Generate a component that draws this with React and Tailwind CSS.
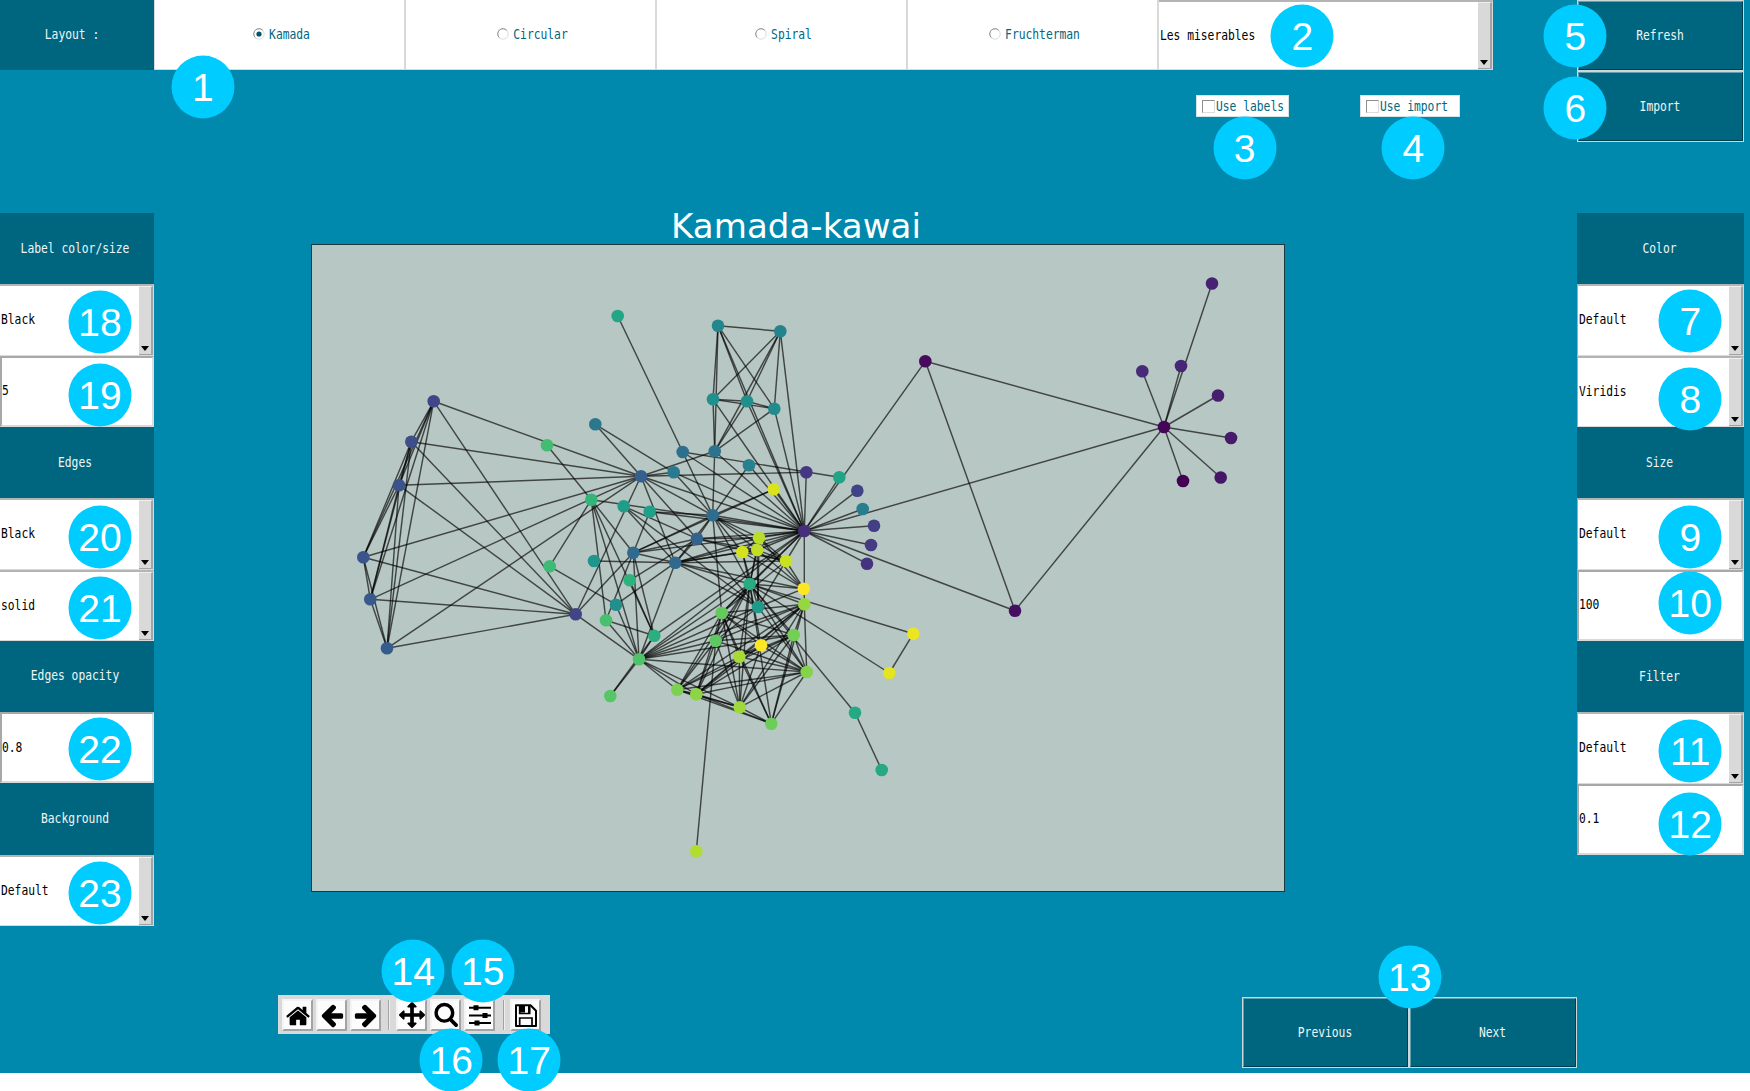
import React from "react";

/* Node: [x, y, colour index] on the figure canvas */
const NODES = {
  Napoleon: [1183, 481, 0], Myriel: [1164, 427, 1], Baptistine: [925.3, 361.3, 2], Magloire: [1015, 610.7, 3],
  Countess: [1220.7, 477.5, 4], Geborand: [1231, 438, 5], Champtercier: [1218, 395.5, 6], Cravatte: [1212, 283.5, 7],
  Count: [1181, 366, 8], OldMan: [1142.3, 371.3, 9], Valjean: [804.3, 531, 10], Labarre: [867, 563.7, 11],
  Marguerite: [806.3, 472.3, 12], MmeDeR: [871, 545, 13], Isabeau: [874, 525.7, 14], Gervais: [857.3, 490.7, 15],
  Listolier: [433.7, 401.3, 16], Tholomyes: [575.7, 614.3, 15.5], Fameuil: [411.3, 441.7, 18], Blacheville: [399, 485.3, 19],
  Favourite: [363.3, 557.3, 20], Dahlia: [370.3, 599.3, 21], Zephine: [387, 648.3, 22], Fantine: [641, 476.3, 23],
  MmeThenardier: [697, 538.7, 24], Thenardier: [675.3, 562.7, 25], Cosette: [633.3, 552.7, 26], Javert: [712.7, 515.3, 27],
  Fauchelevent: [682.7, 452, 28], Bamatabois: [714.7, 451.3, 29], Perpetue: [595.3, 424.3, 30], Simplice: [673.7, 472.3, 31],
  Scaufflaire: [862.7, 509, 32], Woman1: [749, 465.3, 33], Judge: [780.3, 331.3, 34], Champmathieu: [718, 325.7, 35],
  Brevet: [774.3, 408.7, 36], Chenildieu: [713, 399.3, 38], Cochepaille: [747, 401.3, 38], Pontmercy: [616, 604.7, 38],
  Boulatruelle: [594, 561, 40], Eponine: [758, 607, 41], Anzelma: [623.7, 506.3, 42], Woman2: [649.7, 511.7, 43],
  Innocent: [839.3, 477.3, 44], Gribier: [617.7, 316, 45], Burgon: [855, 712.7, 46], Jondrette: [881.7, 770, 46],
  Gavroche: [749.7, 584, 47], Gillenormand: [654.3, 635.7, 48], Magnon: [629.7, 580.3, 49], MlleGillenormand: [591.3, 499.7, 50],
  MmePontmercy: [549.7, 566.3, 52], Vaubois: [547, 445.3, 53], LtGillenormand: [606, 620.3, 54], Marius: [639, 659.3, 55],
  BaronessT: [610.3, 696, 56], Mabeuf: [715.7, 640.7, 57], Enjolras: [721.7, 613, 58], Combeferre: [793.7, 635, 60],
  Prouvaire: [771.3, 723.7, 59], Feuilly: [677.3, 689.7, 61], Courfeyrac: [806.7, 672, 62], Bahorel: [696.3, 694.3, 63],
  Bossuet: [804.3, 604.3, 64], Joly: [739.7, 707.3, 65], Grantaire: [739.3, 656.7, 66], Plutarch: [696.3, 851.3, 67],
  Gueulemer: [759, 537.7, 68], Babet: [757.3, 550, 69], Claquesous: [786, 561, 70], Montparnasse: [742.3, 552, 71],
  Toussaint: [773.7, 489.3, 72], Child1: [889.3, 673, 73], Child2: [913.3, 633.7, 74], Brujon: [803.7, 588.7, 76],
  Hucheloup: [761, 645.3, 76],
};

/* Each line: a character followed by the ones it appears with */
const LINKS = `Myriel Napoleon Baptistine Magloire Countess Geborand Champtercier Cravatte Count OldMan Valjean
Magloire Baptistine Valjean
Valjean Baptistine Labarre Marguerite MmeDeR Isabeau Gervais Fantine MmeThenardier Thenardier Cosette Javert Fauchelevent Bamatabois Simplice Scaufflaire Woman1 Judge Champmathieu Brevet Chenildieu Cochepaille Woman2 Innocent Gavroche Gillenormand MlleGillenormand Marius Enjolras Bossuet Gueulemer Babet Claquesous Montparnasse Toussaint
Tholomyes Listolier Fameuil Blacheville Favourite Dahlia Zephine Fantine Cosette Marius
Listolier Fameuil Blacheville Favourite Dahlia Zephine Fantine
Fameuil Blacheville Favourite Dahlia Zephine Fantine
Blacheville Favourite Dahlia Zephine Fantine
Favourite Dahlia Zephine Fantine
Dahlia Zephine Fantine
Zephine Fantine
Fantine Marguerite MmeThenardier Thenardier Javert Bamatabois Perpetue Simplice
MmeThenardier Thenardier Cosette Javert Eponine Anzelma Magnon Gueulemer Babet Claquesous
Thenardier Cosette Javert Pontmercy Boulatruelle Eponine Anzelma Gavroche Marius Gueulemer Babet Claquesous Montparnasse Brujon
Cosette Javert Woman2 Gillenormand MlleGillenormand LtGillenormand Marius Toussaint
Javert Fauchelevent Bamatabois Simplice Woman1 Woman2 Gavroche Enjolras Gueulemer Babet Claquesous Montparnasse Toussaint
Fauchelevent Innocent Gribier
Bamatabois Judge Champmathieu Brevet Chenildieu Cochepaille
Simplice Perpetue
Judge Champmathieu Brevet Chenildieu Cochepaille
Champmathieu Brevet Chenildieu Cochepaille
Brevet Chenildieu Cochepaille
Chenildieu Cochepaille
Eponine Anzelma Marius Mabeuf Courfeyrac Gueulemer Babet Claquesous Montparnasse Brujon
Burgon Jondrette Gavroche
Gillenormand Magnon MlleGillenormand LtGillenormand Marius BaronessT
MlleGillenormand MmePontmercy Vaubois LtGillenormand Marius
Pontmercy MmePontmercy Marius
Marius Gavroche LtGillenormand BaronessT Mabeuf Enjolras Combeferre Feuilly Courfeyrac Bahorel Bossuet Joly
Gavroche Mabeuf Enjolras Combeferre Prouvaire Feuilly Courfeyrac Bahorel Bossuet Joly Grantaire Gueulemer Babet Montparnasse Child1 Child2 Brujon Hucheloup
Mabeuf Enjolras Combeferre Feuilly Courfeyrac Bahorel Bossuet Joly Plutarch
Enjolras Combeferre Prouvaire Feuilly Courfeyrac Bahorel Bossuet Joly Grantaire Claquesous Hucheloup
Combeferre Prouvaire Feuilly Courfeyrac Bahorel Bossuet Joly Grantaire
Prouvaire Feuilly Courfeyrac Bahorel Bossuet Joly Grantaire
Feuilly Courfeyrac Bahorel Bossuet Joly Grantaire
Courfeyrac Bahorel Bossuet Joly Grantaire Hucheloup
Bahorel Bossuet Joly Grantaire Hucheloup
Bossuet Joly Grantaire Hucheloup
Joly Grantaire Hucheloup
Grantaire Hucheloup
Gueulemer Babet Claquesous Montparnasse Brujon
Babet Claquesous Montparnasse Brujon
Claquesous Montparnasse Brujon
Montparnasse Brujon
Child1 Child2`
  .split("\n")
  .flatMap((line) => {
    const [from, ...rest] = line.trim().split(" ");
    return rest.map((to) => [from, to]);
  });

const VIRIDIS = [
  [68, 1, 84], [72, 26, 108], [71, 47, 125], [65, 68, 135], [57, 86, 140], [49, 104, 142], [42, 120, 142],
  [35, 136, 142], [31, 152, 139], [34, 168, 132], [53, 183, 121], [84, 197, 104], [122, 209, 81],
  [165, 219, 54], [210, 226, 27], [253, 231, 37],
];
function viridis(t) {
  const p = Math.min(t, 1) * 15;
  const i = Math.min(Math.floor(p), 14);
  const c = VIRIDIS[i].map((v, k) => Math.round(v + (VIRIDIS[i + 1][k] - v) * (p - i)));
  return `rgb(${c.join(",")})`;
}

function Graph() {
  return (
    <svg viewBox="312 245 972 646" className="block h-full w-full">
      <g stroke="#000" strokeOpacity="0.65" strokeWidth="1.45">
        {LINKS.map(([a, b]) => (
          <line key={a + b} x1={NODES[a][0]} y1={NODES[a][1]} x2={NODES[b][0]} y2={NODES[b][1]} />
        ))}
      </g>
      {Object.entries(NODES).map(([name, [x, y, i]]) => (
        <circle key={name} cx={x} cy={y} r="6.3" fill={viridis(i / 76)} />
      ))}
    </svg>
  );
}

function T({ children, className = "" }) {
  return (
    <span className={`inline-block origin-center translate-y-[0.5px] scale-y-[1.22] whitespace-pre font-['DejaVu_Sans_Mono',monospace] text-[11.3px] leading-[14px] ${className}`}>
      {children}
    </span>
  );
}

function Header({ children, className = "pr-1" }) {
  return (
    <div className={`flex min-h-0 items-center justify-center bg-[#00667f] text-[#eef6f8] ${className}`}>
      <T>{children}</T>
    </div>
  );
}

function ListBox({ children, className = "border-l" }) {
  return (
    <div className={`flex min-h-0 items-center justify-between border-t-2 border-r border-b border-t-[#b4b4b4] border-r-[#d9d9d9] border-b-[#d9d9d9] border-l-[#a8a8a8] bg-white text-black ${className}`}>
      <T className="pl-px">{children}</T>
      <div className="flex h-full w-[14px] items-end justify-center border-t border-r-2 border-b border-t-[#efefef] border-r-[#a3a3a3] border-b-[#a3a3a3] bg-[#d9d9d9] pb-[3px]">
        <svg viewBox="0 0 8 5" className="h-[5px] w-2"><path d="M0 0h8L4 5z" fill="#000" /></svg>
      </div>
    </div>
  );
}

function Entry({ children }) {
  return (
    <div className="flex min-h-0 items-center border-2 border-t-[#a8a8a8] border-r-[#dedede] border-b-[#d9d9d9] border-l-[#a8a8a8] bg-white text-black">
      <T>{children}</T>
    </div>
  );
}

function Button({ children, className = "" }) {
  return (
    <div className={`border border-[#cfd6d8] ${className}`}>
      <div className="flex h-full items-center justify-center border border-t-[#5fa0b0] border-r-[#003e4e] border-b-[#003e4e] border-l-[#5fa0b0] bg-[#00667f] pr-px text-[#eef6f8]">
        <T>{children}</T>
      </div>
    </div>
  );
}

function Radio({ label, checked }) {
  return (
    <div className="flex h-full w-[251px] items-center justify-center gap-1 border-r-2 border-b border-[#d9d9d9] bg-white pl-1 text-[#00667f]">
      <svg viewBox="0 0 12 12" className="-mt-0.5 h-3 w-3">
        <circle cx="6" cy="6" r="5.2" fill="#fff" stroke="#dcdcdc" />
        <path d="M2.2 9.6A5.2 5.2 0 0 1 9.8 2.3" fill="none" stroke="#8f8f8f" />
        {checked && <circle cx="6" cy="6" r="2.6" fill="#00556b" />}
      </svg>
      <T>{label}</T>
    </div>
  );
}

function Check({ label, className }) {
  return (
    <div className={`flex h-[22px] items-center gap-[1px] border border-[#d5e3e7] bg-white pl-[5px] text-[#00667f] ${className}`}>
      <div className="h-[13px] w-[13px] shrink-0 border border-t-[#8f8f8f] border-r-[#dcdcdc] border-b-[#dcdcdc] border-l-[#8f8f8f] bg-white" />
      <T className="mt-px">{label}</T>
    </div>
  );
}

const FA = {
  home: "M1472 992v480q0 26-19 45t-45 19h-384v-384h-256v384h-384q-26 0-45-19t-19-45v-480q0-1 .5-3t.5-3l575-474 575 474q1 2 1 6zm223-69l-62 74q-8 9-21 11h-3q-13 0-21-7l-692-577-692 577q-12 8-24 7-13-2-21-11l-62-74q-8-10-7-23.5t11-21.5l719-599q32-26 76-26t76 26l244 204v-195q0-14 9-23t23-9h192q14 0 23 9t9 23v408l219 182q10 8 11 21.5t-7 23.5z",
  back: "M1664 896v128q0 53-32.5 90.5t-84.5 37.5h-704l293 294q38 36 38 90t-38 90l-75 76q-37 37-90 37-52 0-91-37l-651-652q-37-37-37-90 0-52 37-91l651-650q38-38 91-38 52 0 90 38l75 74q38 38 38 91t-38 91l-293 293h704q52 0 84.5 37.5t32.5 90.5z",
  move: "M1792 896q0 26-19 45l-256 256q-19 19-45 19t-45-19-19-45v-128h-384v384h128q26 0 45 19t19 45-19 45l-256 256q-19 19-45 19t-45-19l-256-256q-19-19-19-45t19-45 45-19h128v-384h-384v128q0 26-19 45t-45 19-45-19l-256-256q-19-19-19-45t19-45l256-256q19-19 45-19t45 19 19 45v128h384v-384h-128q-26 0-45-19t-19-45 19-45l256-256q19-19 45-19t45 19l256 256q19 19 19 45t-19 45-45 19h-128v384h384v-128q0-26 19-45t45-19 45 19l256 256q19 19 19 45z",
};

function Tool({ children, viewBox = "0 0 1792 1792", className = "" }) {
  return (
    <div className="flex h-8 w-[31px] items-center justify-center border-2 border-t-[#f4f4f4] border-r-[#a3a3a3] border-b-[#a3a3a3] border-l-[#f4f4f4] bg-[#fcfcfc]">
      <svg viewBox={viewBox} className={`h-[26px] w-[26px] shrink-0 overflow-visible ${className}`}>{children}</svg>
    </div>
  );
}

function Toolbar() {
  return (
    <div className="-mt-[2px] flex h-[39px] w-[272px] items-center gap-[3px] bg-[#d9d9d9] pl-1">
      <Tool className="translate-y-px"><path d={FA.home} /></Tool>
      <Tool><path d={FA.back} /></Tool>
      <Tool className="-scale-x-100"><path d={FA.back} /></Tool>
      <div className="mr-[3px] ml-1 h-[30px] w-0.5 border-r border-l border-l-[#a3a3a3] border-r-[#efefef]" />
      <Tool><path d={FA.move} /></Tool>
      <Tool viewBox="0 0 26 26">
        <circle cx="11.4" cy="10.8" r="8.3" fill="none" stroke="#000" strokeWidth="3.4" />
        <path d="M17.5 17.5l5.6 5.6" stroke="#000" strokeWidth="3.8" strokeLinecap="round" />
      </Tool>
      <Tool viewBox="0 0 26 26">
        <path d="M2 5.7h22M2 13.5h22M2 21h22" stroke="#000" strokeWidth="2.1" />
        <path d="M6.5 3.2h5v5h-5zM15.5 11h5v5h-5zM7.5 18.5h5v5h-5z" />
      </Tool>
      <div className="mr-[2px] ml-[5px] h-[30px] w-0.5 border-r border-l border-l-[#a3a3a3] border-r-[#efefef]" />
      <Tool viewBox="0 0 26 26">
        <path d="M3 3.3h14.5l5.5 5.5v15.2h-20z" fill="none" stroke="#000" strokeWidth="2" strokeLinejoin="round" />
        <path d="M6.7 3v8.5h10V3M6.7 24v-8h12.3v8" fill="none" stroke="#000" strokeWidth="1.7" />
        <path d="M7 3h5v7.5H7zM15 3h2v8h-2z" />
      </Tool>
    </div>
  );
}

const BADGES = [
  [202.8, 87.3], [1302.3, 35.7], [1244.6, 148.3], [1413.4, 148.3], [1575.3, 36], [1575.3, 108.3],
  [1690.3, 321.3], [1690.3, 398.5], [1690.3, 537.3], [1690.3, 603.3], [1690.3, 751.3], [1690.3, 824.3],
  [1409.7, 977.3], [413.3, 971], [482.7, 971], [451.3, 1059.5], [529.3, 1059.5], [100, 322.3],
  [100, 394.5], [100, 536.5], [100, 607.8], [100, 749.3], [100, 893],
];

export default function App() {
  return (
    <div className="relative h-[1091px] w-[1750px] overflow-hidden bg-white">
      <div className="flex h-[1073px] flex-col bg-[#0088ad]">
        <header className="flex h-[213px] shrink-0 items-start">
          <Header className="h-[70px] w-[154px] pr-[10px]">Layout :</Header>
          <div className="flex h-[70px] border-l border-[#d9d9d9]">
            <Radio label="Kamada" checked />
            <Radio label="Circular" />
            <Radio label="Spiral" />
            <Radio label="Fruchterman" />
          </div>
          <div className="w-[334px]">
            <ListBox className="h-[70px] w-full border-t-0">Les miserables</ListBox>
            <div className="mt-[25px] ml-[37px] flex">
              <Check label="Use labels" className="w-[93px]" />
              <Check label="Use import" className="ml-[71px] w-[100px]" />
            </div>
          </div>
          <div className="ml-auto flex w-[173px] flex-col pr-[6px]">
            <Button className="h-[71px] w-[167px]">Refresh</Button>
            <Button className="h-[71px] w-[167px]">Import</Button>
          </div>
        </header>

        <main className="flex min-h-0 flex-1">
          <aside className="grid h-[713px] w-[154px] auto-rows-fr">
            <Header>Label color/size</Header>
            <ListBox className="">Black</ListBox>
            <Entry>5</Entry>
            <Header>Edges</Header>
            <ListBox className="">Black</ListBox>
            <ListBox className="">solid</ListBox>
            <Header>Edges opacity</Header>
            <Entry>0.8</Entry>
            <Header>Background</Header>
            <ListBox className="">Default</ListBox>
          </aside>

          <section className="flex w-[1423px] flex-col">
            <h1 className="ml-[157px] flex h-[31px] w-[974px] items-end justify-center pr-1 pb-[3px] font-['DejaVu_Sans',sans-serif] text-[34.1px] leading-[29px] whitespace-nowrap text-white">
              Kamada-kawai
            </h1>
            <div className="ml-[157px] h-[648px] w-[974px] border border-[#1c3b40] bg-[#b7c7c3]"><Graph /></div>
            <div className="mt-[105px] ml-[124px] flex items-start justify-between">
              <Toolbar />
              <div className="flex">
                <Button className="h-[71px] w-[167px]">Previous</Button>
                <Button className="h-[71px] w-[168px]">Next</Button>
              </div>
            </div>
          </section>

          <aside className="grid h-[642px] w-[167px] auto-rows-fr">
            <Header className="pr-0.5">Color</Header>
            <ListBox>Default</ListBox>
            <ListBox>Viridis</ListBox>
            <Header className="pr-0.5">Size</Header>
            <ListBox>Default</ListBox>
            <Entry>100</Entry>
            <Header className="pr-0.5">Filter</Header>
            <ListBox>Default</ListBox>
            <Entry>0.1</Entry>
          </aside>
        </main>
      </div>

      {BADGES.map(([x, y], i) => (
        <div
          key={i}
          className="absolute flex h-[63px] w-[63px] -translate-x-1/2 -translate-y-1/2 items-center justify-center rounded-full bg-[#00ccff] font-['Liberation_Sans',sans-serif] text-[39px] leading-none text-white"
          style={{ left: x, top: y }}
        >
          {i + 1}
        </div>
      ))}
    </div>
  );
}
